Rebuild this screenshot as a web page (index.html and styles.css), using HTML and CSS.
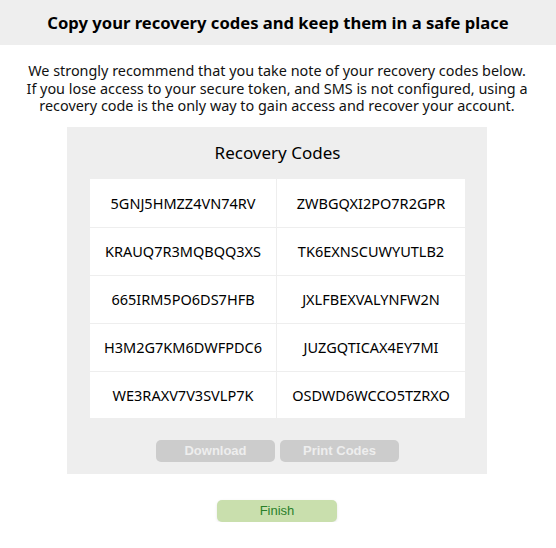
FILE: index.html
```html
<!DOCTYPE html>
<html>
<head>
<meta charset="utf-8">
<link rel="stylesheet" href="styles.css">
</head>
<body>
<header class="header"><h1 class="title">Copy your recovery codes and keep them in a safe place</h1></header>
<main class="main">
<p class="intro">We strongly recommend that you take note of your recovery codes below.<br>If you lose access to your secure token, and SMS is not configured, using a<br>recovery code is the only way to gain access and recover your account.</p>
<section class="box">
  <h2 class="box-title">Recovery Codes</h2>
  <div class="codes">
    <div class="code">5GNJ5HMZZ4VN74RV</div>
    <div class="code">ZWBGQXI2PO7R2GPR</div>
    <div class="code">KRAUQ7R3MQBQQ3XS</div>
    <div class="code">TK6EXNSCUWYUTLB2</div>
    <div class="code">665IRM5PO6DS7HFB</div>
    <div class="code">JXLFBEXVALYNFW2N</div>
    <div class="code">H3M2G7KM6DWFPDC6</div>
    <div class="code">JUZGQTICAX4EY7MI</div>
    <div class="code">WE3RAXV7V3SVLP7K</div>
    <div class="code">OSDWD6WCCO5TZRXO</div>
  </div>
  <div class="actions">
    <button class="btn btn-disabled">Download</button>
    <button class="btn btn-disabled">Print Codes</button>
  </div>
</section>
<div class="finish-row"><button class="btn btn-finish">Finish</button></div>
</main>
</body>
</html>
```

FILE: styles.css
```css
html, body {
  margin: 0;
  padding: 0;
  background: #fff;
}
body {
  font-family: "Noto Sans", "DejaVu Sans", sans-serif;
  color: #000;
}
.header {
  background: #eee;
  height: 45px;
  display: flex;
  align-items: center;
  justify-content: center;
}
.title {
  margin: 0;
  font-size: 16.6px;
  font-weight: bold;
  line-height: 20px;
}
.main {
  padding-right: 2px;
}
.intro {
  margin: 17px 0 0;
  font-size: 14.4px;
  line-height: 17.5px;
  text-align: center;
  white-space: nowrap;
  color: #111;
}
.box {
  width: 420px;
  margin: 12px auto 0;
  background: #eee;
  box-sizing: border-box;
  padding: 16px 22px 12px 23px;
}
.box-title {
  margin: 0 0 16px;
  font-size: 17px;
  font-weight: normal;
  text-align: center;
  line-height: 20px;
}
.codes {
  display: grid;
  grid-template-columns: 187px 188px;
  background: #fff;
}
.code {
  height: 48px;
  display: flex;
  align-items: center;
  justify-content: center;
  font-size: 14.5px;
  box-sizing: border-box;
  border-top: 1px solid #eee;
}
.code:nth-child(odd) { border-right: 1px solid #eee; }
.code:nth-child(-n+2) { border-top: none; }
.code:nth-last-child(-n+2) { height: 47px; }
.actions {
  display: flex;
  justify-content: center;
  gap: 5px;
  margin-top: 22px;
}
.btn {
  width: 119px;
  height: 22px;
  border: none;
  border-radius: 5px;
  font-family: "Liberation Sans", Arial, sans-serif;
  font-size: 13px;
  padding: 0;
}
.btn-disabled {
  background: #ccc;
  color: #eee;
  font-weight: bold;
}
.finish-row {
  display: flex;
  justify-content: center;
  margin-top: 26px;
}
.btn-finish {
  width: 120px;
  background: #c9dfad;
  color: #2a7f2a;
  box-shadow: 0 1px 3px rgba(0,0,0,0.1);
}
```
